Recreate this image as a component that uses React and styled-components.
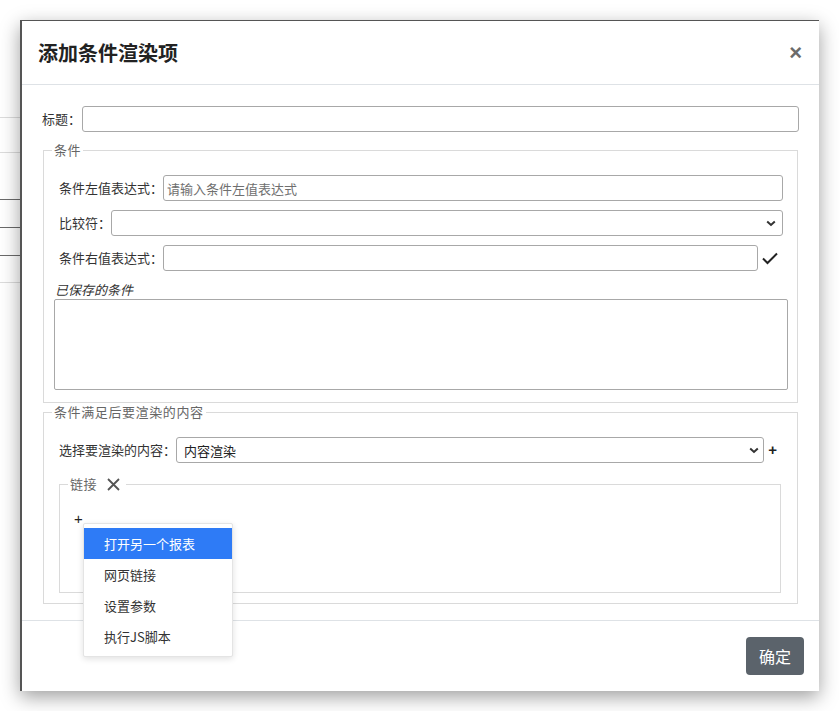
import React from "react";
import styled, { createGlobalStyle } from "styled-components";

const Global = createGlobalStyle`
  html, body { margin: 0; padding: 0; background: #fff; }
  body {
    width: 839px; height: 711px; overflow: hidden; position: relative;
    font-family: "Noto Sans CJK SC", "Noto Sans", sans-serif;
    color: #333;
  }
  * { box-sizing: border-box; }
`;

const Backdrop = styled.div`
  width: 22px;
  display: flex;
  flex-direction: column;
  padding-top: 117px;
`;

const BgLine = styled.div`
  height: 1px;
  margin-bottom: ${(p) => p.$gap}px;
  background: ${(p) => (p.$dark ? "#6a6a6a" : "#dcdcdc")};
`;

const Modal = styled.div`
  position: absolute;
  left: 20px;
  top: 20px;
  width: 799px;
  background: #fff;
  border-top: 1px solid #555;
  border-left: 2px solid #555;
  box-shadow: 0 6px 18px rgba(0, 0, 0, 0.38);
  display: flex;
  flex-direction: column;
`;

const Header = styled.div`
  height: 64px;
  border-bottom: 1px solid #dee2e6;
  display: flex;
  align-items: center;
  justify-content: space-between;
  padding: 0 17px 0 16px;
`;

const Title = styled.h4`
  margin: 0;
  font-size: 20px;
  font-weight: 700;
  color: #222;
  line-height: 28px;
`;

const Close = styled.span`
  font-family: "Liberation Sans", Arial, sans-serif;
  font-size: 22px;
  font-weight: 700;
  color: #6b6b6b;
  line-height: 1;
`;

const Body = styled.div`
  padding: 21px 20px 16px 20px;
  display: flex;
  flex-direction: column;
`;

const Row = styled.div`
  display: flex;
  align-items: center;
`;

const Label = styled.span`
  font-size: 13px;
  line-height: 18px;
  color: #333;
  white-space: nowrap;
  margin-right: ${(p) => p.$mr || 0}px;
`;

const Input = styled.input`
  flex: 1;
  min-width: 0;
  height: 26px;
  border: 1px solid #a8a8a8;
  border-radius: 3px;
  padding: 0 3px;
  font-family: inherit;
  font-size: 13px;
  color: #333;
  outline: none;
  background: #fff;
  &::placeholder { color: #6f6f6f; }
`;

const Select = styled.div`
  flex: 1;
  min-width: 0;
  height: 26px;
  border: 1px solid #a8a8a8;
  border-radius: 3px;
  padding: 0 ${(p) => p.$pr || 5}px 0 7px;
  display: flex;
  align-items: center;
  justify-content: space-between;
  font-size: 13px;
  color: #222;
  background: #fff;
`;

const Fieldset = styled.fieldset`
  margin: ${(p) => p.$margin || "0"};
  padding: 0;
  min-width: 0;
  border: 1px solid #dadada;
`;

const Legend = styled.legend`
  margin-left: 8px;
  padding: 0 ${(p) => p.$pr || 2}px 0 2px;
  font-size: 13px;
  line-height: 18px;
  color: #666;
  display: flex;
  align-items: center;
  gap: 10px;
  letter-spacing: 0.6px;
`;

const Content = styled.div`
  padding: ${(p) => p.$padding};
  display: flex;
  flex-direction: column;
`;

const Stack = styled.div`
  display: flex;
  flex-direction: column;
  gap: 9px;
`;

const Saved = styled.div`
  margin: 10px -5px 0 -5px;
  display: flex;
  flex-direction: column;
`;

const SavedLabel = styled.span`
  font-size: 13px;
  line-height: 18px;
  font-style: italic;
  color: #333;
  padding-left: 1px;
`;

const TextArea = styled.textarea`
  display: block;
  width: 100%;
  height: 91px;
  border: 1px solid #a8a8a8;
  border-radius: 2px;
  resize: none;
  outline: none;
  font-family: inherit;
`;

const Plus = styled.span`
  font-family: "Liberation Sans", Arial, sans-serif;
  font-size: 15px;
  line-height: 18px;
  color: #222;
  font-weight: ${(p) => (p.$bold ? 700 : 400)};
  margin: 0 ${(p) => p.$mr || 0}px 0 ${(p) => p.$ml || 0}px;
`;

const PlusAnchor = styled.div`
  position: relative;
  align-self: flex-start;
  display: flex;
  height: 18px;
  line-height: 18px;
  font-size: 13px;
`;

const Menu = styled.ul`
  position: absolute;
  left: 9px;
  top: 13px;
  width: 150px;
  margin: 0;
  padding: 4px 0 4px;
  list-style: none;
  background: #fff;
  border: 1px solid #e4e4e4;
  border-radius: 2px;
  box-shadow: 0 2px 6px rgba(0, 0, 0, 0.12);
  z-index: 5;
`;

const MenuItem = styled.li`
  height: 31px;
  display: flex;
  align-items: center;
  padding-left: 20px;
  font-size: 13px;
  color: ${(p) => (p.$active ? "#fff" : "#333")};
  background: ${(p) => (p.$active ? "#2e7bf6" : "transparent")};
`;

const Footer = styled.div`
  border-top: 1px solid #dee2e6;
  padding: 16px 15px 16px 16px;
  display: flex;
  justify-content: flex-end;
`;

const Button = styled.button`
  width: 58px;
  height: 38px;
  border: none;
  border-radius: 4px;
  background: #5b636b;
  color: #fff;
  font-family: inherit;
  font-size: 16px;
  padding: 0;
`;

const Chevron = () => (
  <svg width="10" height="7" viewBox="0 0 10 7">
    <polyline points="1.2,1.5 5,5 8.8,1.5" fill="none" stroke="#333" strokeWidth="2" />
  </svg>
);

const Check = () => (
  <svg width="16" height="13" viewBox="0 0 16 13" style={{ flex: "none", margin: "0 5px 0 4px" }}>
    <polyline points="1,6.5 5.5,11 15,1.5" fill="none" stroke="#222" strokeWidth="2" />
  </svg>
);

const Cross = () => (
  <svg width="13" height="13" viewBox="0 0 13 13">
    <path d="M1 1 L12 12 M12 1 L1 12" stroke="#555" strokeWidth="1.8" fill="none" />
  </svg>
);

export default function App() {
  return (
    <>
      <Global />
      <Backdrop>
        <BgLine $gap={34} />
        <BgLine $gap={46} />
        <BgLine $gap={27} $dark />
        <BgLine $gap={27} $dark />
        <BgLine $gap={26} $dark />
        <BgLine $gap={0} />
      </Backdrop>
      <Modal>
        <Header>
          <Title>添加条件渲染项</Title>
          <Close>×</Close>
        </Header>
        <Body>
          <Row>
            <Label $mr={1}>标题：</Label>
            <Input />
          </Row>
          <Fieldset $margin="9px 1px 0 1px">
            <Legend>条件</Legend>
            <Content $padding="16px 14px 12px 15px">
              <Stack>
                <Row>
                  <Label>条件左值表达式：</Label>
                  <Input placeholder="请输入条件左值表达式" />
                </Row>
                <Row>
                  <Label>比较符：</Label>
                  <Select $pr={6}>
                    <span />
                    <Chevron />
                  </Select>
                </Row>
                <Row>
                  <Label>条件右值表达式：</Label>
                  <Input />
                  <Check />
                </Row>
              </Stack>
              <Saved>
                <SavedLabel>已保存的条件</SavedLabel>
                <TextArea />
              </Saved>
            </Content>
          </Fieldset>
          <Fieldset $margin="0 1px">
            <Legend>条件满足后要渲染的内容</Legend>
            <Content $padding="16px 14px 10px 15px">
              <Row>
                <Label>选择要渲染的内容：</Label>
                <Select $pr={4}>
                  <span>内容渲染</span>
                  <Chevron />
                </Select>
                <Plus $bold $ml={4} $mr={6}>+</Plus>
              </Row>
              <Fieldset $margin="12px 2px 0 0">
                <Legend $pr={6}>
                  <span>链接</span>
                  <Cross />
                </Legend>
                <Content $padding="17px 14px 64px 14px">
                  <PlusAnchor>
                    <Plus>+</Plus>
                    <Menu>
                      <MenuItem $active>打开另一个报表</MenuItem>
                      <MenuItem>网页链接</MenuItem>
                      <MenuItem>设置参数</MenuItem>
                      <MenuItem>执行JS脚本</MenuItem>
                    </Menu>
                  </PlusAnchor>
                </Content>
              </Fieldset>
            </Content>
          </Fieldset>
        </Body>
        <Footer>
          <Button>确定</Button>
        </Footer>
      </Modal>
    </>
  );
}
